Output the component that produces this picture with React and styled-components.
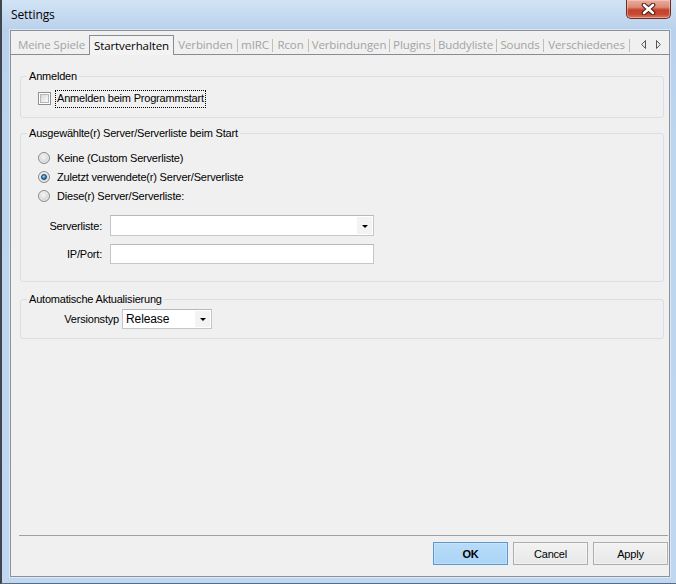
import React from 'react';
import styled, { createGlobalStyle } from 'styled-components';

const Global = createGlobalStyle`
  html, body { margin: 0; padding: 0; background: #bcd5ef; }
  body { width: 676px; height: 584px; overflow: hidden; }
  * { box-sizing: border-box; }
`;

const Window = styled.div`
  width: 676px;
  height: 584px;
  display: flex;
  flex-direction: column;
  background: linear-gradient(180deg, #d2e3f5 0px, #b9d1ec 30px, #bcd5ef 120px, #bfd7f0 100%);
  border-left: 2px solid #3f464e;
  border-bottom: 1px solid #5d6b7a;
  padding: 0 6px 6px 8px;
  font-family: "Liberation Sans", Arial, sans-serif;
  font-size: 11px;
  letter-spacing: -0.2px;
  color: #000;
`;

const TitleBar = styled.div`
  height: 30px;
  display: flex;
  align-items: flex-start;
`;

const Title = styled.div`
  font-family: "Open Sans", "Noto Sans", sans-serif;
  font-size: 12px;
  letter-spacing: -0.1px;
  line-height: 16px;
  padding-top: 7px;
  margin-left: 1px;
  color: #000;
`;

const CloseButton = styled.div`
  margin-left: auto;
  margin-right: -1px;
  width: 45px;
  height: 19px;
  border: 1px solid #6b2c22;
  border-top: none;
  border-radius: 0 0 5px 5px;
  background: linear-gradient(180deg, #e9ad9e 0%, #dc8a75 40%, #c5412b 55%, #c84a33 80%, #dc7a62 100%);
  box-shadow: inset 0 0 0 1px rgba(255, 220, 210, 0.45);
  display: flex;
  align-items: center;
  justify-content: center;
`;

const Client = styled.div`
  flex: 1;
  display: flex;
  flex-direction: column;
  border: 1px solid #8b9299;
  background: #f0f0f0;
  box-shadow: 0 0 0 1px rgba(255, 255, 255, 0.45);
`;

const TabStrip = styled.div`
  height: 24px;
  display: flex;
  align-items: flex-end;
  padding-left: 3px;
  border-bottom: 1px solid #898c95;
  font-family: "Open Sans", "Noto Sans", sans-serif;
  font-size: 11.5px;
  letter-spacing: -0.1px;
`;

const Tab = styled.div`
  width: ${(p) => p.$w}px;
  height: ${(p) => (p.$active ? 20 : 19)}px;
  margin-bottom: ${(p) => (p.$active ? -1 : 0)}px;
  display: flex;
  align-items: center;
  justify-content: center;
  white-space: nowrap;
  color: ${(p) => (p.$active ? '#000' : '#a3a3a3')};
  background: ${(p) => (p.$active ? '#f3f3f3' : 'transparent')};
  border: ${(p) => (p.$active ? '1px solid #898c95' : 'none')};
  border-bottom: none;
  padding-bottom: 1px;
`;

const TabSep = styled.span`
  width: 1px;
  height: 13px;
  margin-bottom: 2px;
  background: #c7bcab;
`;

const TabArrows = styled.div`
  margin-left: 11px;
  margin-bottom: 5px;
  display: flex;
  gap: 10px;
`;

const Page = styled.div`
  flex: 1;
  display: flex;
  flex-direction: column;
  padding: 15px 5px 0 9px;
`;

const Group = styled.fieldset`
  margin: ${(p) => p.$mt || 0}px 0 0 0;
  padding: 0;
  min-width: 0;
  border: 1px solid #d5dfe5;
  border-radius: 3px;
`;

const Legend = styled.legend`
  margin-left: 6px;
  padding: 0 2px;
  line-height: 13px;
  font-size: 11px;
  color: #000;
`;

const GroupBody = styled.div`
  display: flex;
  flex-direction: column;
  padding: ${(p) => p.$pad};
`;

const CheckRow = styled.label`
  display: flex;
  align-items: center;
  height: 17px;
  gap: 4px;
`;

const CheckBox = styled.span`
  width: 13px;
  height: 13px;
  border: 1px solid #8e8f8f;
  background: #fff;
  padding: 1px;
  display: flex;
  & > span {
    flex: 1;
    border: 1px solid #b3b8bd;
    background: linear-gradient(135deg, #d8d8d8 0%, #eeeeee 60%, #fafafa 100%);
  }
`;

const FocusLabel = styled.span`
  border: 1px dotted #000;
  padding: 1px 1px 2px 1px;
  line-height: 13px;
`;

const RadioRow = styled.label`
  display: flex;
  align-items: center;
  height: 19px;
  gap: 7px;
  padding-left: 17px;
`;

const Radio = styled.span`
  width: 12px;
  height: 12px;
  border-radius: 50%;
  border: 1px solid #8a8a8a;
  background: radial-gradient(circle at 45% 40%, #f6f6f6 0%, #dedede 45%, #c2c2c2 100%);
  box-shadow: inset 0 0 0 1px rgba(255, 255, 255, 0.6);
  display: flex;
  align-items: center;
  justify-content: center;
`;

const RadioDot = styled.span`
  width: 6px;
  height: 6px;
  border-radius: 50%;
  border: 1px solid #1c3f63;
  background: radial-gradient(circle at 40% 35%, #a6dcff 0%, #3b8fd6 45%, #17508c 100%);
`;

const FormRow = styled.div`
  display: grid;
  grid-template-columns: ${(p) => p.$lw}px ${(p) => p.$iw}px;
  column-gap: ${(p) => p.$gap}px;
  align-items: center;
  margin-top: ${(p) => p.$mt || 0}px;
`;

const FieldLabel = styled.span`
  text-align: right;
  white-space: nowrap;
`;

const ComboBox = styled.div`
  height: ${(p) => p.$h}px;
  display: flex;
  align-items: center;
  background: #fff;
  border: 1px solid #c4c6ca;
  border-top-color: #b5b8bd;
  padding: 1px;
`;

const ComboText = styled.span`
  flex: 1;
  padding-left: 2px;
  font-size: 12px;
  letter-spacing: -0.1px;
`;

const ComboButton = styled.span`
  width: 15px;
  align-self: stretch;
  background: #f3f3f3;
  display: flex;
  align-items: center;
  justify-content: center;
`;

const Arrow = styled.span`
  width: 0;
  height: 0;
  border-left: 3px solid transparent;
  border-right: 3px solid transparent;
  border-top: 3px solid #000;
  margin-top: 1px;
`;

const TextBox = styled.div`
  height: 20px;
  background: #fff;
  border: 1px solid #c4c6ca;
  border-top-color: #b5b8bd;
`;

const Separator = styled.div`
  height: 1px;
  margin: 0 1px 0 8px;
  background: #a0a0a0;
`;

const ButtonRow = styled.div`
  display: flex;
  justify-content: flex-end;
  gap: 5px;
  padding: 6px 1px 11px 0;
`;

const Button = styled.button`
  width: 75px;
  height: 23px;
  margin: 0;
  padding: 0;
  font-family: "Liberation Sans", Arial, sans-serif;
  font-size: 11px;
  letter-spacing: -0.2px;
  font-weight: ${(p) => (p.$primary ? 700 : 400)};
  color: #000;
  border: 1px solid ${(p) => (p.$primary ? '#5a98cf' : '#adadad')};
  background: ${(p) =>
    p.$primary
      ? 'linear-gradient(180deg, #b8dcf9 0%, #acd4f6 100%)'
      : 'linear-gradient(180deg, #f2f2f2 0%, #e8e8e8 100%)'};
  box-shadow: inset 0 0 0 1px ${(p) => (p.$primary ? 'rgba(255,255,255,0.25)' : 'rgba(255,255,255,0.4)')};
`;

const tabs = [
  { label: 'Meine Spiele', w: 75 },
  { label: 'Startverhalten', w: 85, active: true },
  { label: 'Verbinden', w: 63, sep: true },
  { label: 'mIRC', w: 34, sep: true },
  { label: 'Rcon', w: 35, sep: true },
  { label: 'Verbindungen', w: 80, sep: true },
  { label: 'Plugins', w: 44, sep: true },
  { label: 'Buddyliste', w: 61, sep: true },
  { label: 'Sounds', w: 46, sep: true },
  { label: 'Verschiedenes', w: 85, sep: true },
];

const radios = [
  { label: 'Keine (Custom Serverliste)' },
  { label: 'Zuletzt verwendete(r) Server/Serverliste', checked: true },
  { label: 'Diese(r) Server/Serverliste:' },
];

function Combo({ h = 21, value }) {
  return (
    <ComboBox $h={h}>
      <ComboText>{value}</ComboText>
      <ComboButton>
        <Arrow />
      </ComboButton>
    </ComboBox>
  );
}

export default function App() {
  return (
    <>
      <Global />
      <Window>
        <TitleBar>
          <Title>Settings</Title>
          <CloseButton>
            <svg width="15" height="12" viewBox="0 0 15 12">
              <path d="M3 2 L12 10 M12 2 L3 10" stroke="#4a1a12" strokeWidth="4.6" strokeLinecap="round" />
              <path d="M3 2 L12 10 M12 2 L3 10" stroke="#ffffff" strokeWidth="2.6" strokeLinecap="round" />
            </svg>
          </CloseButton>
        </TitleBar>
        <Client>
          <TabStrip>
            {tabs.map((t) => (
              <React.Fragment key={t.label}>
                <Tab $w={t.w} $active={t.active}>{t.label}</Tab>
                {t.sep && <TabSep />}
              </React.Fragment>
            ))}
            <TabArrows>
              <svg width="5" height="9" viewBox="0 0 5 9">
                <path d="M4.5 0.5 L0.7 4.5 L4.5 8.5 Z" fill="none" stroke="#555" strokeWidth="1" />
              </svg>
              <svg width="5" height="9" viewBox="0 0 5 9">
                <path d="M0.5 0.5 L4.3 4.5 L0.5 8.5 Z" fill="none" stroke="#555" strokeWidth="1" />
              </svg>
            </TabArrows>
          </TabStrip>
          <Page>
            <Group>
              <Legend>Anmelden</Legend>
              <GroupBody $pad="7px 0 10px 17px">
                <CheckRow>
                  <CheckBox><span /></CheckBox>
                  <FocusLabel>Anmelden beim Programmstart</FocusLabel>
                </CheckRow>
              </GroupBody>
            </Group>
            <Group $mt={9}>
              <Legend>Ausgewählte(r) Server/Serverliste beim Start</Legend>
              <GroupBody $pad="8px 0 17px 0">
                {radios.map((r) => (
                  <RadioRow key={r.label}>
                    <Radio>{r.checked && <RadioDot />}</Radio>
                    <span>{r.label}</span>
                  </RadioRow>
                ))}
                <FormRow $lw={81} $iw={264} $gap={8} $mt={10}>
                  <FieldLabel>Serverliste:</FieldLabel>
                  <Combo h={21} value="" />
                </FormRow>
                <FormRow $lw={81} $iw={264} $gap={8} $mt={8}>
                  <FieldLabel>IP/Port:</FieldLabel>
                  <TextBox />
                </FormRow>
              </GroupBody>
            </Group>
            <Group $mt={11}>
              <Legend>Automatische Aktualisierung</Legend>
              <GroupBody $pad="3px 0 9px 0">
                <FormRow $lw={98} $iw={90} $gap={3}>
                  <FieldLabel>Versionstyp</FieldLabel>
                  <Combo h={20} value="Release" />
                </FormRow>
              </GroupBody>
            </Group>
          </Page>
          <Separator />
          <ButtonRow>
            <Button $primary>OK</Button>
            <Button>Cancel</Button>
            <Button>Apply</Button>
          </ButtonRow>
        </Client>
      </Window>
    </>
  );
}
